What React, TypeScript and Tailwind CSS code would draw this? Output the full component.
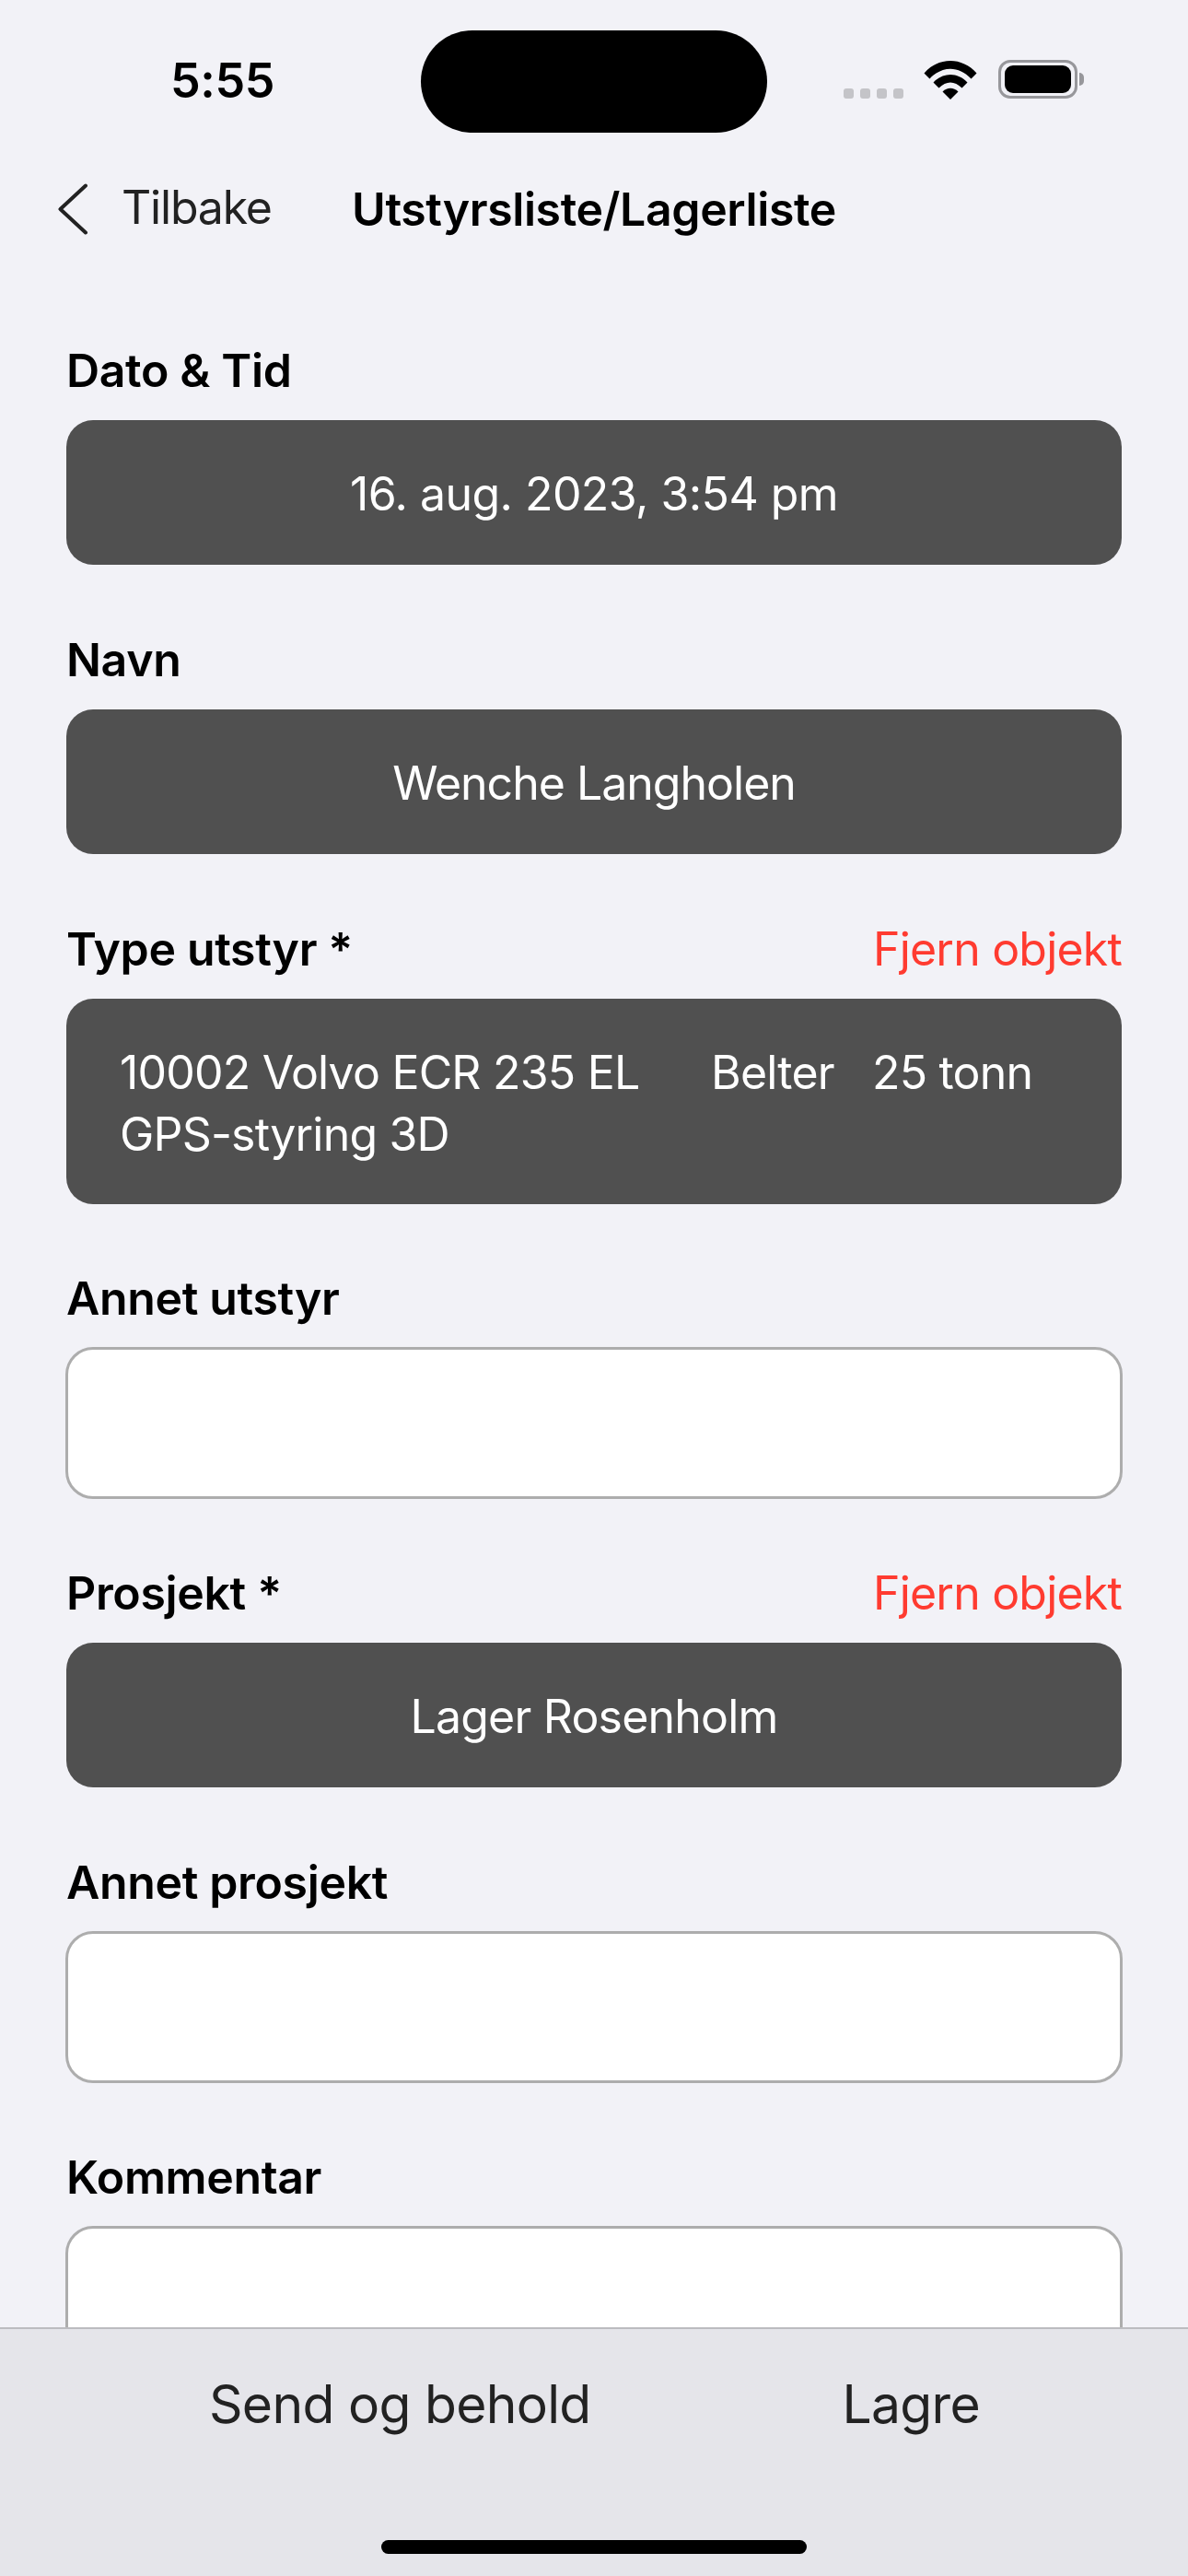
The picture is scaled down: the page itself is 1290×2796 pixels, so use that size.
import React from "react";

const font = { fontFamily: '"Inter", "Liberation Sans", sans-serif' };

function StatusBar() {
  return (
    <div className="relative h-[174px] shrink-0">
      <span className="absolute left-[185px] top-[63px] text-[52px] leading-[50px] font-semibold tracking-[-0.4px] text-black">
        5:55
      </span>
      {/* dynamic island */}
      <div className="absolute left-[457px] top-[33px] h-[111px] w-[376px] rounded-full bg-black" />
      <div className="absolute left-[916px] top-[96px] flex gap-[7px]">
        <div className="h-[11px] w-[11px] rounded-[3px] bg-[#c4c4c8]" />
        <div className="h-[11px] w-[11px] rounded-[3px] bg-[#c4c4c8]" />
        <div className="h-[11px] w-[11px] rounded-[3px] bg-[#c4c4c8]" />
        <div className="h-[11px] w-[11px] rounded-[3px] bg-[#c4c4c8]" />
      </div>
      <svg className="absolute left-[1003px] top-[65px]" width="58" height="43" viewBox="0 0 58 43" fill="none">
        <path d="M0.5 14.5 C16 -3.5 42 -3.5 57.5 14.5 L51.5 20.5 C38 6 20 6 6.5 20.5 Z" fill="#000" />
        <path d="M10.5 24.5 C21 13 37 13 47.5 24.5 L41.5 30.5 C33.5 22.5 24.5 22.5 16.5 30.5 Z" fill="#000" />
        <path d="M20.5 34.5 C25.5 29.5 32.5 29.5 37.5 34.5 L29 43 Z" fill="#000" />
      </svg>
      <div className="absolute left-[1084px] top-[65px] flex items-center">
        <div className="flex h-[42px] w-[86px] items-center justify-center rounded-[13px] border-[3px] border-[#97979b]">
          <div className="h-[30px] w-[72px] rounded-[9px] bg-black" />
        </div>
        <div className="ml-[2px] h-[14px] w-[5px] rounded-r-full bg-[#97979b]" />
      </div>
    </div>
  );
}

function Header() {
  return (
    <div className="relative flex h-[106px] shrink-0 items-center justify-center">
      <button className="absolute left-[62px] top-[25px] flex items-center">
        <svg width="34" height="56" viewBox="0 0 34 56" fill="none">
          <path d="M31 2.5 L3.5 28 L31 53.5" stroke="#222" strokeWidth="4" strokeLinecap="round" strokeLinejoin="round" />
        </svg>
        <span className="ml-[36px] -mt-[4px] text-[50px] leading-[60px] tracking-[-1.2px] text-[#222]">Tilbake</span>
      </button>
      <h1 className="text-[50px] leading-[60px] font-semibold tracking-[-0.4px] text-black">Utstyrsliste/Lagerliste</h1>
    </div>
  );
}

function FieldLabel({ label, remove }: { label: string; remove?: boolean }) {
  return (
    <div className="mb-[24px] flex h-[62px] items-center justify-between pt-[2px]">
      <span className="text-[50px] leading-[62px] font-semibold tracking-[-0.35px] text-black">{label}</span>
      {remove && <span className="text-[50px] leading-[62px] tracking-[-0.8px] text-[#ff3b30]">Fjern objekt</span>}
    </div>
  );
}

function DarkBox({ children, className }: { children: React.ReactNode; className?: string }) {
  return (
    <div className={"flex h-[157px] items-center justify-center rounded-[29px] bg-[#505050] pt-[3px] text-[50px] text-white " + (className ?? "tracking-[-0.8px]")}>
      {children}
    </div>
  );
}

// inputs sit 1px outside the column on every side
function EmptyBox() {
  return <div className="-mx-px -mt-px -mb-px h-[165px] rounded-[30px] border-[3px] border-[#adadad] bg-white" />;
}

export default function App() {
  return (
    <div className="flex h-[2796px] w-[1290px] flex-col overflow-hidden bg-[#f2f2f7]" style={font}>
      <StatusBar />
      <Header />
      <main className="flex min-h-0 flex-1 flex-col gap-[71px] overflow-hidden px-[72px] pt-[90px]">
        <section>
          <FieldLabel label="Dato & Tid" />
          <DarkBox className="tracking-[-0.55px]">16. aug. 2023, 3:54 pm</DarkBox>
        </section>
        <section>
          <FieldLabel label="Navn" />
          <DarkBox className="tracking-[-1px]">Wenche Langholen</DarkBox>
        </section>
        <section>
          <FieldLabel label="Type utstyr *" remove />
          <div className="mt-px -mb-px h-[223px] rounded-[29px] bg-[#505050] px-[58px] pt-[47px] text-[50px] leading-[67px] tracking-[-0.8px] text-white">
            <div className="flex">
              <span className="w-[642px]">10002 Volvo ECR 235 EL</span>
              <span className="w-[175px]">Belter</span>
              <span>25 tonn</span>
            </div>
            <div>GPS-styring 3D</div>
          </div>
        </section>
        <section>
          <FieldLabel label="Annet utstyr" />
          <EmptyBox />
        </section>
        <section>
          <FieldLabel label="Prosjekt *" remove />
          <DarkBox>Lager Rosenholm</DarkBox>
        </section>
        <section>
          <FieldLabel label="Annet prosjekt" />
          <EmptyBox />
        </section>
        <section>
          <FieldLabel label="Kommentar" />
          <EmptyBox />
        </section>
      </main>
      <footer className="relative h-[270px] shrink-0 border-t-2 border-[#bcbcc0] bg-[#e5e5ea]">
        <div className="flex pt-[46px] text-[57px] leading-[72px] tracking-[-0.7px] text-[#222]">
          <span className="ml-[227px]">Send og behold</span>
          <span className="ml-[273px]">Lagre</span>
        </div>
        <div className="absolute bottom-[24px] left-[414px] h-[15px] w-[462px] rounded-full bg-black" />
      </footer>
    </div>
  );
}
